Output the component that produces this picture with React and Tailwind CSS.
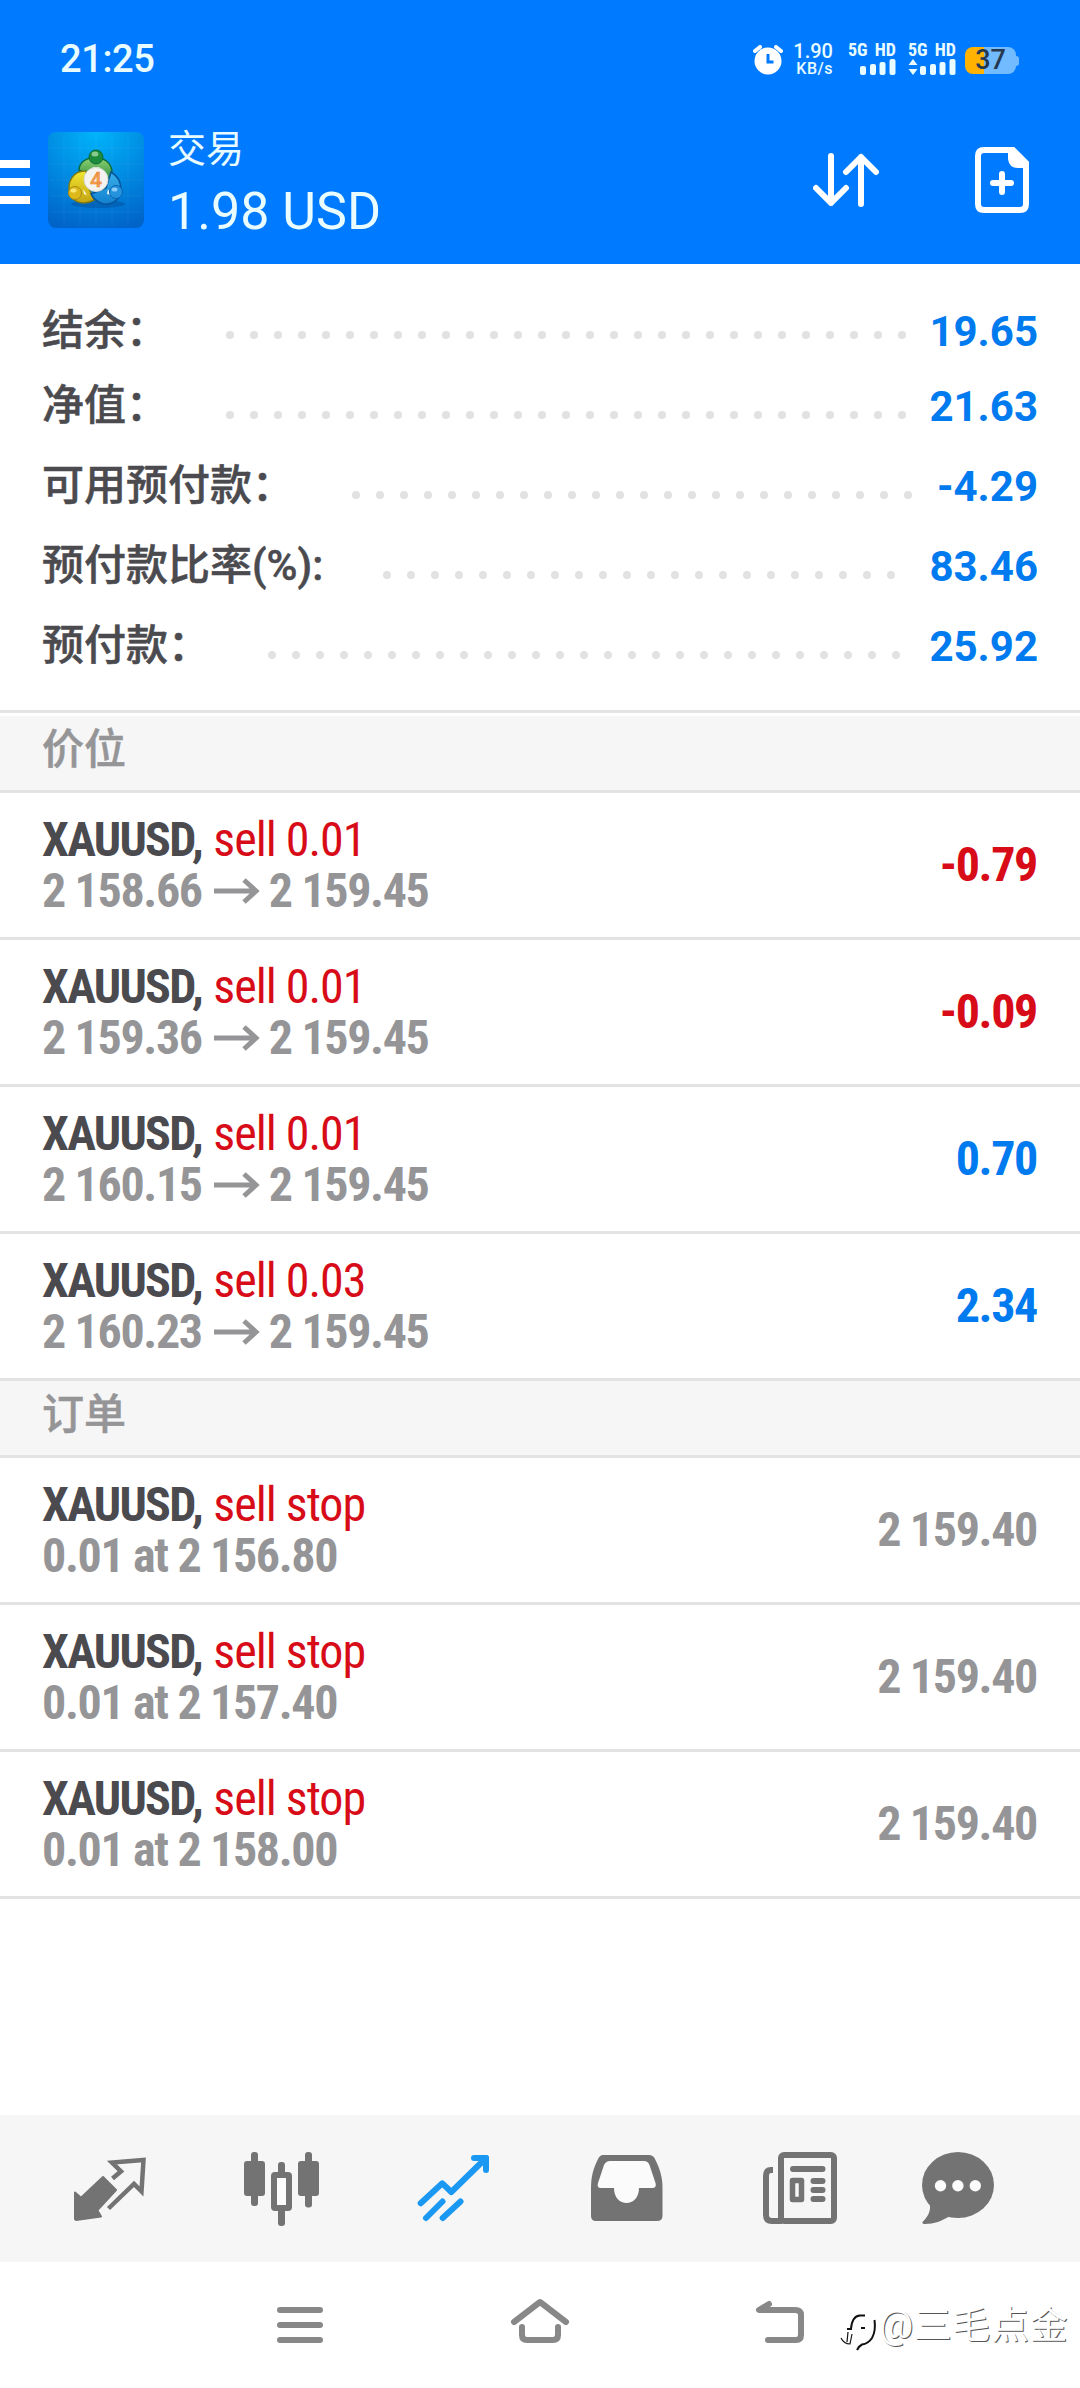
import React from "react";

const summary = [
  { label: "结余：", value: "19.65", dots: 29, start: "left-[226px]", shift: "pb-[8px]" },
  { label: "净值：", value: "21.63", dots: 29, start: "left-[226px]", shift: "pb-[18px]" },
  { label: "可用预付款：", value: "-4.29", dots: 24, start: "left-[352px]", shift: "pb-[18px]" },
  { label: "预付款比率(%):", value: "83.46", dots: 22, start: "left-[383px]", shift: "pb-[18px]" },
  { label: "预付款：", value: "25.92", dots: 27, start: "left-[268px]", shift: "pb-[18px]" },
];

const positions = [
  { type: "sell 0.01", open: "2 158.66", current: "2 159.45", profit: "-0.79" },
  { type: "sell 0.01", open: "2 159.36", current: "2 159.45", profit: "-0.09" },
  { type: "sell 0.01", open: "2 160.15", current: "2 159.45", profit: "0.70" },
  { type: "sell 0.03", open: "2 160.23", current: "2 159.45", profit: "2.34" },
];

const orders = [
  { detail: "0.01 at 2 156.80", price: "2 159.40" },
  { detail: "0.01 at 2 157.40", price: "2 159.40" },
  { detail: "0.01 at 2 158.00", price: "2 159.40" },
];

const Signal = ({ data }) => (
  <div className="w-[48px]">
    <div className="text-[18px] leading-[15px] font-bold [font-stretch:85%] [word-spacing:3px] whitespace-nowrap">5G HD</div>
    <svg width="48" height="18" viewBox="0 0 48 18" fill="currentColor" className="mt-[1px]">
      {data && <path d="M5 1 L9.5 7 H0.5 Z M5 17 L9.5 11 H0.5 Z" />}
      <rect x="12" y="8" width="6" height="9" rx="2" />
      <rect x="22" y="6" width="6" height="11" rx="2" />
      <rect x="31.5" y="4" width="6" height="13" rx="2" />
      <rect x="41.5" y="1" width="6" height="16" rx="2" />
    </svg>
  </div>
);

const StatusBar = () => (
  <div className="flex h-[120px] items-start pl-[60px] text-[#e9fcff]">
    <div className="w-[693px] pt-[37px] text-[38px] leading-[44px] font-medium tracking-[-0.4px]">21:25</div>
    <svg width="30" height="30" viewBox="0 0 30 30" className="mt-[45px]">
      <circle cx="15" cy="16" r="13.5" fill="#fff" />
      <path d="M2 6 L7 2 M28 6 L23 2" stroke="#fff" strokeWidth="4" strokeLinecap="round" />
      <path d="M15 9 V17 H20.5" fill="none" stroke="#007bff" strokeWidth="3" />
    </svg>
    <div className="ml-[10px] w-[40px] pt-[41px] text-right">
      <div className="text-[20px] leading-[20px] font-medium">1.90</div>
      <div className="text-[16px] leading-[16px] font-medium tracking-[0.5px]">KB/s</div>
    </div>
    <div className="ml-[15px] flex gap-[12px] pt-[42px]">
      <Signal />
      <Signal data />
    </div>
    <div className="mt-[47px] ml-[9px] flex items-center">
      <div className="flex h-[27px] w-[51px] items-center justify-center rounded-[8px] bg-[linear-gradient(90deg,#ffb300_38%,#73bbff_38%)] text-[27px] font-medium text-[#24384f]">
        37
      </div>
      <div className="h-[10px] w-[3px] rounded-r-sm bg-[#73bbff]" />
    </div>
  </div>
);

const Logo = () => (
  <svg width="96" height="96" viewBox="0 0 96 96">
    <defs>
      <radialGradient id="tile" cx="0.5" cy="0" r="1.05">
        <stop offset="0" stopColor="#00b4fa" />
        <stop offset="0.5" stopColor="#008ce2" />
        <stop offset="1" stopColor="#0063c8" />
      </radialGradient>
      <linearGradient id="green" x1="0" y1="0" x2="0" y2="1">
        <stop offset="0" stopColor="#8fd071" />
        <stop offset="1" stopColor="#17833a" />
      </linearGradient>
      <linearGradient id="yellow" x1="0" y1="0" x2="0" y2="1">
        <stop offset="0" stopColor="#f2e530" />
        <stop offset="1" stopColor="#c3a412" />
      </linearGradient>
      <linearGradient id="blue" x1="0" y1="0" x2="0" y2="1">
        <stop offset="0" stopColor="#39b0ea" />
        <stop offset="1" stopColor="#1180cf" />
      </linearGradient>
    </defs>
    <rect width="96" height="96" rx="8" fill="url(#tile)" />
    <path d="M16 2V94M32 2V94M48 2V94M64 2V94M80 2V94M2 16H94M2 32H94M2 48H94M2 64H94M2 80H94" stroke="#fff" strokeOpacity="0.05" />
    <ellipse cx="50" cy="72" rx="27" ry="4" fill="#003f86" opacity="0.35" />
    <path d="M31 38 C31 22 63 20 64 40 C64 46 62 50 58 53 L38 42 Z" fill="url(#green)" stroke="#0b6b3c" strokeWidth="1.5" />
    <path d="M38 39 C26 38 18 50 22 62 C26 72 38 73 46 68 L40 54 Z" fill="url(#yellow)" stroke="#7d7a16" strokeWidth="1.5" />
    <path d="M63 40 C76 48 76 66 64 71 C54 75 46 68 43 62 L58 56 Z" fill="url(#blue)" stroke="#07549b" strokeWidth="1.5" />
    <path d="M44 35 L48 38 L52 35 M35 57 L36 62 L39 63 M60 57 L59 62 L63 63" fill="#fff" opacity="0.9" />
    <circle cx="48" cy="25" r="7" fill="#1d8b3c" stroke="#0b6b3c" />
    <ellipse cx="47" cy="22" rx="3.5" ry="2.5" fill="#a3dba0" opacity="0.8" />
    <circle cx="27" cy="61" r="6.5" fill="#ddb91b" stroke="#a98c11" />
    <ellipse cx="25.5" cy="58.5" rx="3" ry="2" fill="#fff28a" opacity="0.8" />
    <circle cx="68" cy="60" r="6.5" fill="#2492dd" stroke="#0c63ae" />
    <ellipse cx="66.5" cy="57.5" rx="3" ry="2" fill="#a2dcff" opacity="0.8" />
    <circle cx="48" cy="47.5" r="12" fill="#f5f3f0" stroke="#cfd8d0" />
    <text x="48" y="55" textAnchor="middle" fontSize="21" fontWeight="500" fill="#f6a04f" stroke="#e8853a" strokeWidth="0.5">4</text>
  </svg>
);

const Header = () => (
  <header className="h-[264px] bg-[#007bff]">
    <StatusBar />
    <div className="flex items-start text-[#e9fcff]">
      <div className="mt-[40px] flex w-[30px] flex-col gap-[10px]">
        <div className="h-[8px] bg-white" />
        <div className="h-[8px] bg-white" />
        <div className="h-[8px] bg-white" />
      </div>
      <div className="mt-[12px] ml-[18px]">
        <Logo />
      </div>
      <div className="ml-[24px] w-[645px]">
        <div className="pt-[6px] text-[38px] leading-[46px]">交易</div>
        <div className="pt-[9px] text-[52px] leading-[62px] font-normal">1.98 USD</div>
      </div>
      <svg width="66" height="54" viewBox="0 0 66 54" fill="none" stroke="#fff" strokeWidth="6" strokeLinecap="round" strokeLinejoin="round" className="mt-[33px]">
        <path d="M18 3 V50 M3 35 L18 50 L33 35" />
        <path d="M48 51 V4 M33 19 L48 4 L63 19" />
      </svg>
      <svg width="54" height="66" viewBox="0 0 54 66" className="mt-[27px] ml-[96px]">
        <path d="M9 3 H38 L51 16 V57 Q51 63 45 63 H9 Q3 63 3 57 V9 Q3 3 9 3 Z" fill="none" stroke="#fff" strokeWidth="6" />
        <path d="M33 4 V12 Q34 21 43 21 H52 V15 L40 3 Z" fill="#fff" />
        <path d="M27 27 V45 M18 36 H36" stroke="#fff" strokeWidth="6" strokeLinecap="round" />
      </svg>
    </div>
  </header>
);

const SummaryRow = ({ item }) => (
  <div className="relative h-[80px]">
    <div className={`flex h-full items-center justify-between ${item.shift} pr-[42px] pl-[42px] text-[42px]`}>
      <span className="leading-[60px] font-medium text-[#4a4a4f] [-webkit-text-stroke:0.5px_#4a4a4f]">{item.label}</span>
      <span className="font-bold text-[#007bef]">{item.value}</span>
    </div>
    {/* dotted leader between label and value */}
    <div className={`absolute top-[36px] flex gap-[16px] ${item.start}`}>
      {Array.from({ length: item.dots }).map((_, i) => (
        <span key={i} className="size-[8px] rounded-full bg-[#e2e2e2]" />
      ))}
    </div>
  </div>
);

const SectionTitle = ({ children }) => (
  <div className="flex h-[77px] items-start border-b-[3px] border-[#e3e3e3] bg-[#f6f6f6] pt-[4px] pl-[42px] text-[42px] leading-[60px] font-medium text-[#959597] [-webkit-text-stroke:0.5px_#959597]">
    {children}
  </div>
);

const TradeRow = ({ type, detail, right }) => (
  <div className="flex h-[147px] items-center justify-between border-b-[3px] border-[#e3e3e3] pr-[43px] pl-[42px] text-[48px] font-bold [font-stretch:75%]">
    <div className="leading-[51px]">
      <div className="tracking-[-1.7px] text-[#4a4a4f]">
        XAUUSD, <span className="ml-[2px] font-normal tracking-[-1px] text-[#d70c18]">{type}</span>
      </div>
      <div className="flex items-center tracking-[-1.35px] text-[#959597]">{detail}</div>
    </div>
    <div className="tracking-[-1.35px]">{right}</div>
  </div>
);

const Arrow = () => (
  <svg width="46" height="26" viewBox="0 0 46 26" fill="none" stroke="#959597" strokeWidth="5" className="mr-[9px] ml-[12px]">
    <path d="M0 13 H43 M30 2 L42 13 L30 24" />
  </svg>
);

const TabBar = () => (
  <nav className="flex h-[147px] items-center bg-[#f6f6f6] px-[24px] text-[#737373]">
    <div className="flex flex-1 justify-center">
      <svg width="88" height="88" viewBox="0 0 88 88">
        <path d="M9 47.5 L15 52.7 L37 32 L50 45 L31.3 65.3 L35 71.5 L10 75 L9 74 Z" fill="currentColor" stroke="currentColor" strokeWidth="2" strokeLinejoin="round" />
        <path d="M46.5 33.5 L55 26.3 L46 17.5 L77.5 15 L75.5 46.5 L68 39 L42.5 63.5" fill="none" stroke="currentColor" strokeWidth="4.5" />
      </svg>
    </div>
    <div className="flex flex-1 justify-center">
      <svg width="88" height="88" viewBox="0 0 88 88" fill="currentColor">
        <rect x="13" y="7" width="7" height="54" rx="3" />
        <rect x="6" y="16" width="21" height="35" rx="3" />
        <rect x="40" y="17" width="7" height="64" rx="3" />
        <rect x="36" y="30" width="15" height="33" rx="1" fill="#fbfbfb" stroke="currentColor" strokeWidth="6" />
        <rect x="67" y="7" width="7" height="55.5" rx="3" />
        <rect x="60" y="16" width="21" height="35" rx="3" />
      </svg>
    </div>
    <div className="flex flex-1 justify-center">
      <svg width="88" height="88" viewBox="0 0 88 88" fill="none" stroke="#1a98f2" strokeWidth="6" strokeLinecap="round" strokeLinejoin="round">
        <path d="M10.7 58.3 L32.3 38.3 L41.3 47 L75 14" />
        <path d="M64 13 H76 V25" />
        <path d="M70 13 H76 V19 Z" fill="#1a98f2" />
        <path d="M32.5 56.5 L16 73 M50.5 56.5 L32.7 73" />
      </svg>
    </div>
    <div className="flex flex-1 justify-center">
      <svg width="88" height="88" viewBox="0 0 88 88">
        <path d="M21 10 H67 Q71 10 73 14 C78 24 80.5 32 80.5 43 V71 Q80.5 76 75 76 H14 Q9 76 9 71 V43 C9 32 11 24 16 14 Q18 10 21 10 Z" fill="currentColor" />
        <path d="M28 16 H62 Q66 16 67.5 20 L73.5 38 Q75 43 70 43 H57 C57 63 32 63 32 43 H19 Q14.5 43 16 38 L22 20 Q24 16 28 16 Z" fill="#fbfbfb" />
      </svg>
    </div>
    <div className="flex flex-1 justify-center">
      <svg width="88" height="88" viewBox="0 0 88 88" fill="none" stroke="currentColor" strokeWidth="6" strokeLinecap="round">
        <rect x="27" y="10" width="53" height="66" rx="3" />
        <path d="M19 25 H17 Q12 25 12 31 V70 Q12 76 18 76 H28" strokeLinecap="butt" />
        <path d="M39 24 H68.5 M59.5 36 H68.5 M59.5 45 H68.5 M59.5 54 H68.5" />
        <rect x="38.5" y="35.5" width="9" height="19" strokeWidth="5.5" strokeLinejoin="round" />
      </svg>
    </div>
    <div className="flex flex-1 -translate-x-3 justify-center">
      <svg width="88" height="88" viewBox="0 0 88 88" fill="currentColor">
        <ellipse cx="44" cy="40" rx="36" ry="33" />
        <path d="M14 54 Q20 66 8.5 77 Q8 79 11 79 C20 79 28 76 36 71 Z" />
        <g fill="#fbfbfb">
          <circle cx="26.5" cy="40.7" r="5.7" />
          <circle cx="43.9" cy="40.7" r="5.7" />
          <circle cx="61.3" cy="40.7" r="5.7" />
        </g>
      </svg>
    </div>
  </nav>
);

const SystemNav = () => (
  <div className="relative flex h-[126px] items-center justify-center gap-[180px] bg-white">
    <svg width="60" height="60" viewBox="0 0 60 60" stroke="#888" strokeWidth="6" strokeLinecap="round">
      <path d="M10 15 H50 M10 30 H50 M10 45 H50" />
    </svg>
    <svg width="60" height="60" viewBox="0 0 60 60" fill="none" stroke="#888" strokeWidth="6" strokeLinecap="round" strokeLinejoin="round">
      <path d="M4 27 L30 7 L56 27" />
      <path d="M12 32 V40 Q12 45 17 45 H43 Q48 45 48 40 V32" />
    </svg>
    <svg width="60" height="60" viewBox="0 0 60 60" fill="none" stroke="#888" strokeWidth="6" strokeLinecap="round" strokeLinejoin="round">
      <path d="M19 9 L9 15 H45 Q51 15 51 20 V40 Q51 45 46 45 H18" />
    </svg>
    {/* author watermark */}
    <div className="absolute top-[39px] left-[838px] flex items-center gap-[3px] text-white">
      <svg width="38" height="46" viewBox="0 0 38 46" fill="none" stroke="#111" className="overflow-visible">
        <path d="M9 27 H13 Q14 14 22 13.5 H27 M23 26 H27" strokeWidth="2" />
        <path d="M36.5 18 Q38 29 34 36 Q30 42 24 42.5 Q21 44 19 48" strokeWidth="2" />
        <path d="M10 30 L9 40 M3 36 Q6 42 12 42 L14 32" strokeWidth="1.2" />
      </svg>
      <span className="text-[38px] leading-[48px] tracking-[0.6px] whitespace-nowrap [text-shadow:1px_1px_0px_#555]">@三毛点金</span>
    </div>
  </div>
);

const App = () => {
  return (
    <div className="flex h-[2388px] w-[1080px] flex-col overflow-hidden bg-white font-['Roboto','Noto_Sans_CJK_SC',sans-serif]">
      <Header />
      <section className="h-[449px] border-b-[3px] border-[#e3e3e3] pt-[31px]">
        {summary.map((item) => (
          <SummaryRow key={item.label} item={item} />
        ))}
      </section>

      <div className="pt-[3px]">
        <SectionTitle>价位</SectionTitle>
      </div>
      {positions.map((p) => (
        <TradeRow
          key={p.open}
          type={p.type}
          detail={
            <>
              {p.open}
              <Arrow />
              {p.current}
            </>
          }
          right={<span className={p.profit.startsWith("-") ? "text-[#d70c18]" : "text-[#007bef]"}>{p.profit}</span>}
        />
      ))}

      <SectionTitle>订单</SectionTitle>
      {orders.map((o) => (
        <TradeRow key={o.detail} type="sell stop" detail={o.detail} right={<span className="text-[#959597]">{o.price}</span>} />
      ))}

      <div className="mt-auto">
        <TabBar />
        <SystemNav />
      </div>
    </div>
  );
};

export default App;
